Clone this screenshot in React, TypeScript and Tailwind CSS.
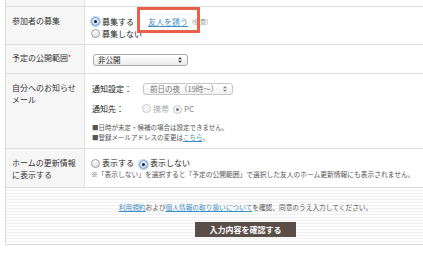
import React from 'react';

const Radio: React.FC<{ checked?: boolean; disabled?: boolean }> = ({ checked, disabled }) => {
  const ring = disabled
    ? 'border-[#c9c9c9] bg-[#f6f6f6]'
    : checked
      ? 'border-[#6d9bd6] bg-gradient-to-b from-[#e8f1fb] to-[#c4dbf3] shadow-[0_0_0_1px_#b8d3f2]'
      : 'border-[#9b9b9b] bg-gradient-to-b from-white to-[#e3e3e3]';
  return (
    <span className={`inline-flex shrink-0 w-[9px] h-[9px] rounded-full border items-center justify-center ${ring}`}>
      {checked && <span className={`w-[3px] h-[3px] rounded-full ${disabled ? 'bg-[#777]' : 'bg-[#1d1d1d]'}`} />}
    </span>
  );
};

const Arrows: React.FC<{ color?: string }> = ({ color = '#444' }) => (
  <svg width="4" height="6" viewBox="0 0 4 6">
    <path d="M2 0 L4 2.2 L0 2.2 Z" fill={color} />
    <path d="M2 6 L4 3.8 L0 3.8 Z" fill={color} />
  </svg>
);

const Label: React.FC<{ children: React.ReactNode; pt?: string }> = ({ children, pt = 'pt-[8px]' }) => (
  <div className={`w-[79px] shrink-0 bg-[#f6f6f6] border-r border-[#e2e2e2] pl-[6px] pr-[2px] ${pt} text-[8px] leading-[11.5px] text-[#333]`}>
    {children}
  </div>
);

export default function App() {
  return (
    <div className="relative w-full h-[280px] overflow-hidden bg-white font-['Noto_Sans_CJK_JP',sans-serif] text-[#222]">
      <div className="ml-[5px] w-[480px] border-l border-b border-[#dcdcdc]">
        {/* partial row at top */}
        <div className="flex h-[7px] border-b border-[#dcdcdc]">
          <div className="w-[79px] bg-[#f6f6f6] border-r border-[#e2e2e2]" />
        </div>

        {/* 参加者の募集 */}
        <div className="flex h-[38px] border-b border-[#dcdcdc]">
          <Label>参加者の募集</Label>
          <div className="pl-[6px] pt-[9px] text-[8px] leading-[11.5px]">
            <div className="flex items-center">
              <Radio checked />
              <span className="ml-[2px]">募集する</span>
              <a className="ml-[14px] text-[#3d8fc6] underline underline-offset-1">友人を誘う</a>
              <span className="ml-[4px] text-[6px] text-[#888]">(任意)</span>
            </div>
            <div className="flex items-center">
              <Radio />
              <span className="ml-[2px]">募集しない</span>
            </div>
          </div>
        </div>

        {/* 予定の公開範囲 */}
        <div className="flex h-[29px] border-b border-[#dcdcdc]">
          <Label pt="pt-[7px]">
            予定の公開範囲<span className="text-[#e00] text-[7px] align-top">*</span>
          </Label>
          <div className="pl-[8px] pt-[9px]">
            <div className="flex items-center justify-between w-[95px] h-[12px] rounded-[3px] border border-[#a8a8a8] bg-gradient-to-b from-white to-[#ebebeb] pl-[4px] pr-[5px] text-[7.5px] leading-none text-[#222]">
              <span>非公開</span>
              <Arrows />
            </div>
          </div>
        </div>

        {/* 自分へのお知らせメール */}
        <div className="flex h-[75px] border-b border-[#dcdcdc]">
          <Label>自分へのお知らせ<br />メール</Label>
          <div className="pl-[7px] pt-[9px] text-[8px]">
            <div className="flex items-center">
              <span className="w-[51px]">通知設定：</span>
              <div className="flex items-center justify-between w-[90px] h-[12px] rounded-[3px] border border-[#c6c6c6] bg-gradient-to-b from-white to-[#f0f0f0] pl-[6px] pr-[5px] text-[7.5px] leading-none text-[#777]">
                <span>前日の夜（19時〜）</span>
                <Arrows color="#888" />
              </div>
            </div>
            <div className="flex items-center mt-[7px] leading-[11px]">
              <span className="w-[50px]">通知先：</span>
              <Radio disabled />
              <span className="ml-[2px] text-[#aaa]">携帯</span>
              <span className="ml-[4px]"><Radio checked disabled /></span>
              <span className="ml-[2px] text-[#888]">PC</span>
            </div>
            <div className="mt-[8px] text-[6.5px] leading-[10px] text-[#555]">
              <div>■日時が未定・候補の場合は設定できません。</div>
              <div>
                ■登録メールアドレスの変更は<a className="text-[#3d8fc6] underline underline-offset-1">こちら</a>。
              </div>
            </div>
          </div>
        </div>

        {/* ホームの更新情報に表示する */}
        <div className="flex h-[39px] border-b border-[#dcdcdc]">
          <Label>ホームの更新情報<br />に表示する</Label>
          <div className="pl-[6px] pt-[8px]">
            <div className="flex items-center text-[8px] leading-[11.5px]">
              <Radio />
              <span className="ml-[2px]">表示する</span>
              <span className="ml-[5px]"><Radio checked /></span>
              <span className="ml-[2px]">表示しない</span>
            </div>
            <div className="text-[6.75px] leading-[10px] text-[#555]">
              ※「表示しない」を選択すると「予定の公開範囲」で選択した友人のホーム更新情報にも表示されません。
            </div>
          </div>
        </div>

        {/* footer */}
        <div className="flex flex-col items-center h-[56px] pt-[14px] bg-[repeating-linear-gradient(180deg,#fdfdfd_0px,#fdfdfd_2px,#f1f1f1_2px,#f1f1f1_3px)]">
          <div className="text-[6.7px] leading-[10px] text-[#555]">
            <a className="text-[#3d8fc6] underline underline-offset-1">利用規約</a>および
            <a className="text-[#3d8fc6] underline underline-offset-1">個人情報の取り扱いについて</a>
            を確認、同意のうえ入力してください。
          </div>
          <button className="mt-[10px] w-[101px] h-[15px] bg-[#5b4e49] text-white text-[8px] font-bold leading-none">
            入力内容を確認する
          </button>
        </div>
      </div>

      {/* annotation box */}
      <div className="absolute left-[137px] top-[7px] w-[63px] h-[26px] border-[3px] border-[#e9604b]" />
    </div>
  );
}
